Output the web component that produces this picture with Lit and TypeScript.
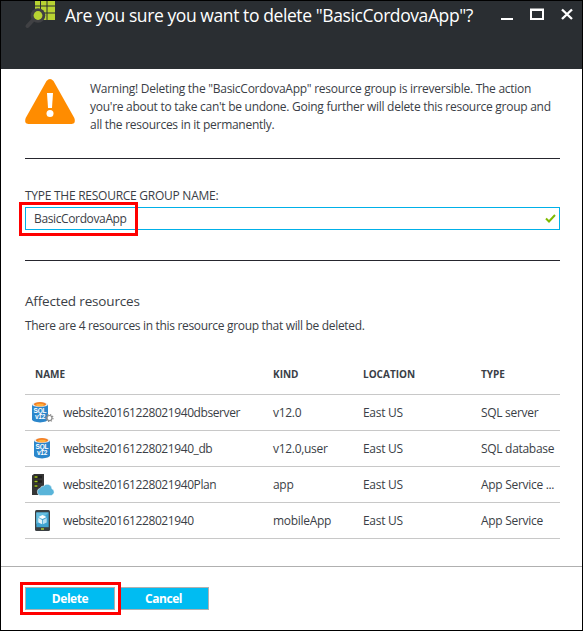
import { LitElement, html, css, svg } from "lit";
import { customElement } from "lit/decorators.js";

const cylinder = svg`
  <path d="M0 2.6V17.6C0 19.2 3.600 20.400 8 20.400s8-1.200 8-2.800V2.600z" fill="#2b86cb"/>
  <ellipse cx="8" cy="2.600" rx="8" ry="2.500" fill="#e9edf0"/>
  <ellipse cx="8" cy="2.300" rx="6.200" ry="2.200" fill="#f58025"/>
  <ellipse cx="8" cy="2.900" rx="4" ry="1.200" fill="#ffb23e"/>
  <text class="sql"><tspan x="8" y="11">SQL</tspan><tspan x="8" y="17.300">v12</tspan></text>`;

const icons: Record<string, unknown> = {
  server: svg`${cylinder}
    <circle cx="17.500" cy="16" r="2.500" fill="#fff" stroke="#8c8c8c" stroke-width="1.200"/>
    <circle cx="17.500" cy="16" r="3.500" fill="none" stroke="#8c8c8c" stroke-width="1.100" stroke-dasharray="1.370 1.380"/>`,
  database: svg`<g transform="translate(2 0)">${cylinder}</g>`,
  plan: svg`
    <path d="M0 1.500L2 0h10v21H0z" fill="#353535"/>
    <path d="M2 3h8M2 7.500h8M2 12h4" stroke="#1e1e1e" stroke-width="2.400"/>
    <path d="M2.500 3h3M2.500 7.500h3M2.500 12h3" stroke="#a6c61e" stroke-width="1.300"/>
    <path d="M8.500 21.500a3.700 3.700 0 0 1-.2-7.300 3.200 3.200 0 0 1 3.200-2.200 4.700 4.700 0 0 1 8.400 2.800 3.500 3.500 0 0 1-.5 6.700z" fill="#59b4d9" stroke="#fff" stroke-width=".5"/>`,
  mobile: svg`
    <rect x="3" y="0" width="15" height="21" rx="1.500" fill="#3a3f42"/>
    <rect x="4.300" y="2.500" width="12.400" height="14.700" fill="#3fa3d1"/>
    <path d="M4.300 2.500h12.400L4.300 14z" fill="#66bee0"/>
    <path d="M10.500 5l4 2-4 2-4-2z" fill="#fff"/>
    <path d="M6.300 8l3.800 1.900v4.400l-3.800-1.900z" fill="#e3f2fa"/>
    <path d="M14.700 8l-3.800 1.900v4.400l3.800-1.900z" fill="#b9dff1"/>
    <rect x="9" y="18.300" width="3" height="1.400" fill="#b8d432"/>`,
};

const rows = [
  { icon: "server", name: "website20161228021940dbserver", kind: "v12.0", type: "SQL server" },
  { icon: "database", name: "website20161228021940_db", kind: "v12.0,user", type: "SQL database" },
  { icon: "plan", name: "website20161228021940Plan", kind: "app", type: "App Service ..." },
  { icon: "mobile", name: "website20161228021940", kind: "mobileApp", type: "App Service" },
];

@customElement("app-root")
export class AppRoot extends LitElement {
  static styles = css`
    :host {
      display: flex; flex-direction: column; box-sizing: border-box;
      width: 583px; height: 631px; border: 1px solid #000; overflow: hidden;
      background: #fff; color: #3a3e46;
      font: 12px/18px "Open Sans", "Noto Sans", sans-serif;
      letter-spacing: -.3px; white-space: nowrap;
    }
    * { box-sizing: border-box; }
    svg { display: block; flex: none; overflow: visible; }
    header { height: 68px; flex: none; background: #2a2e32; color: #fff; display: flex; align-items: flex-start; padding-left: 24px; }
    h1 { margin: 1px 0 0 9px; font-size: 17.500px; line-height: 26px; font-weight: 400; letter-spacing: -.41px; width: 432px; }
    main { height: 497px; flex: none; padding: 10px 22px 0 24px; }
    .warning { display: flex; gap: 15px; height: 80px; border-bottom: 1px solid #26262e; }
    .warning p { margin: 1px 0 0; letter-spacing: -.27px; }
    .field { height: 102px; padding-top: 28px; border-bottom: 1px solid #26262e; }
    .label { display: block; height: 20px; letter-spacing: -.26px; }
    .input { position: relative; height: 23px; border: 1px solid #00b0e8; display: flex; align-items: center; justify-content: space-between; padding: 0 3px 0 8px; }
    .value { letter-spacing: -.37px; }
    .mark { position: absolute; border: 3px solid #f00; pointer-events: none; }
    .input .mark { left: -7px; top: -6px; width: 119px; height: 34px; }
    h2 { margin: 30px 0 0; font-size: 13.500px; line-height: 20px; font-weight: 400; letter-spacing: -.17px; }
    .summary { margin: 6px 0 0; letter-spacing: -.32px; }
    .row { display: grid; grid-template-columns: 31px 210px 90px 118px 79px; height: 36px; align-items: center; border-bottom: 1px solid #c8c8c8; padding-left: 7px; width: 535px; }
    .name { letter-spacing: -.41px; }
    .head { margin-top: 20px; height: 40px; font-size: 10px; font-weight: 700; grid-template-columns: 238px 90px 118px 79px; padding: 0 0 1px 10px; letter-spacing: 0; }
    .sql { font: 700 6.500px "Liberation Sans", sans-serif; fill: #fff; text-anchor: middle; letter-spacing: -.2px; }
    footer { flex: 1; border-top: 1px solid #b0b0b0; padding: 20px 0 0 24px; display: flex; align-items: flex-start; gap: 3px; }
    .button { position: relative; width: 90px; height: 23px; background: #00bcf2; border: 1px solid #b0b0b0; color: #fff; font-weight: 700; line-height: 22px; text-align: center; letter-spacing: -.45px; }
    .button .mark { left: -6px; top: -6px; width: 101px; height: 33px; }
    .cancel { width: 91px; }
    .delete { z-index: 1; }
  `;

  render() {
    return html`
      <header>
        <svg width="31" height="28" viewBox="0 0 31 28">
          <path d="M10 0h20v19H10z" fill="#b8d432"/>
          <path d="M15.500 0v19M22 0v19M10 5h20M10 12h20" stroke="#2a2e32" stroke-width="1"/>
          <path d="M8.500 18.500L2.500 25" stroke="#404144" stroke-width="4" stroke-linecap="round"/>
          <circle cx="13" cy="14.500" r="7.300" fill="#404144"/>
          <circle cx="13" cy="14.500" r="4.400" fill="#b8d432"/>
        </svg>
        <h1>Are you sure you want to delete "BasicCordovaApp"?</h1>
        <svg width="74" height="28" viewBox="0 0 74 28" fill="none" stroke="#fff">
          <path d="M4 18h12" stroke-width="2"/><path d="M34 8.500h12v9.500H34zM33 9h14" stroke-width="2"/>
          <path d="M65 8.500l10 9.500M75 8.500l-10 9.500" stroke-width="2.400"/>
        </svg>
      </header>
      <main>
        <section class="warning">
          <svg width="50" height="45" viewBox="0 0 50 45">
            <path d="M21.500 2Q25-2 28.500 2L49.300 39Q51.500 44.500 46.500 45H3.500Q-1.500 44.500.7 39z" fill="#ff8c00"/>
            <path d="M22 14h6l-1 15h-4z" fill="#fff"/><circle cx="25" cy="34.500" r="3.500" fill="#fff"/>
          </svg>
          <p>
            Warning! Deleting the "BasicCordovaApp" resource group is irreversible. The action<br>
            you're about to take can't be undone. Going further will delete this resource group and<br>
            all the resources in it permanently.
          </p>
        </section>
        <section class="field">
          <span class="label">TYPE THE RESOURCE GROUP NAME:</span>
          <div class="input">
            <span class="value">BasicCordovaApp</span>
            <svg width="11" height="9" viewBox="0 0 11 9"><path d="M1 4.500l3 3L10 1" fill="none" stroke="#7fba00" stroke-width="2"/></svg>
            <div class="mark"></div>
          </div>
        </section>
        <h2>Affected resources</h2>
        <p class="summary">There are 4 resources in this resource group that will be deleted.</p>
        <div class="row head"><span>NAME</span><span>KIND</span><span>LOCATION</span><span>TYPE</span></div>
        ${rows.map((r) => html`
          <div class="row">
            <svg width="21" height="21" viewBox="0 0 21 21">${icons[r.icon]}</svg>
            <span class="name">${r.name}</span><span>${r.kind}</span><span>East US</span><span>${r.type}</span>
          </div>`)}
      </main>
      <footer>
        <div class="button delete">Delete<div class="mark"></div></div>
        <div class="button cancel">Cancel</div>
      </footer>`;
  }
}
